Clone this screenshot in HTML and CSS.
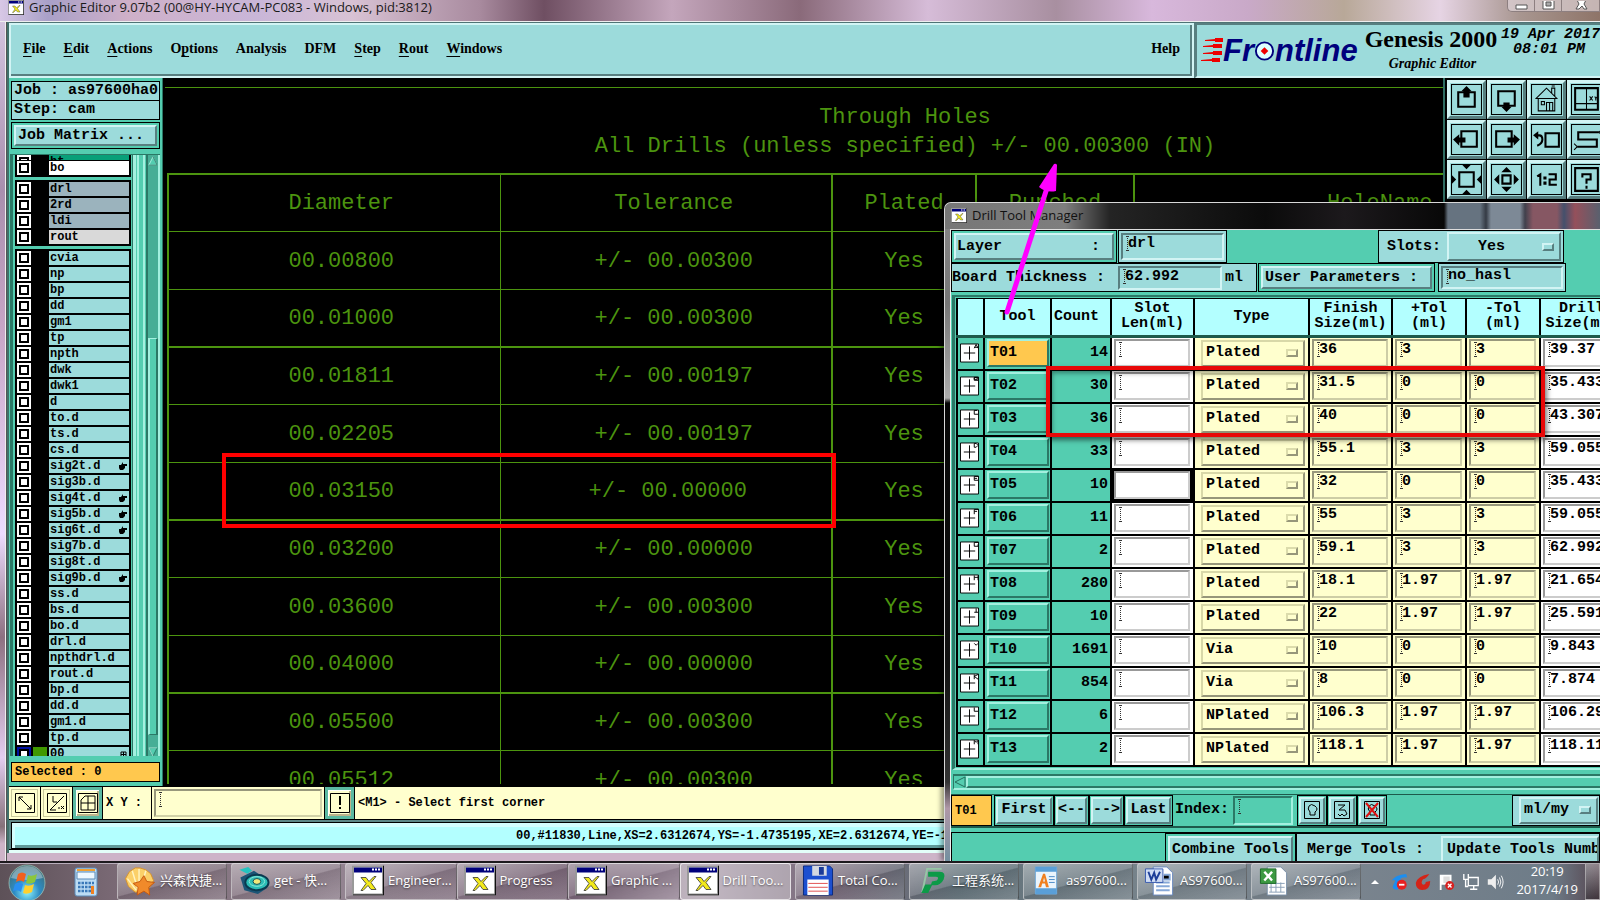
FILE: index.html
```html
<!DOCTYPE html>
<html lang="en">
<head>
<meta charset="utf-8">
<title>Graphic Editor</title>
<link rel="stylesheet" href="styles.css">
</head>
<body>
<svg class="defs" aria-hidden="true">
  <symbol id="x-app" viewBox="0 0 32 30"><path fill="#999" d="M0 0h32v30H0z"/><path fill="#111" d="M31 0h1v30H1v-1h30z"/><path fill="#fff" d="M2 2h28v26H2z"/><path fill="#00007c" d="M2 2h28v5H2z"/><path fill="#fff" d="M20 3h2v2h-2zm3 0h2v2h-2zm3 0h2v2h-2z"/><path d="M9 12h5l3 4 5-5h2l-5 6 5 7h-5l-3-4-5 5H9l5-7z" fill="#f3ea1c" stroke="#333" stroke-width=".8"/></symbol>
</svg>
<div class="desk">
  <main class="editor">
    <header class="titlebar">
      <svg class="app-ic"><use href="#x-app"/></svg>
      <h1>Graphic Editor 9.07b2 (00@HY-HYCAM-PC083 - Windows, pid:3812)</h1>
      <div class="win-ctl">
        <button aria-label="Minimize"><svg viewBox="0 0 14 10"><path d="M2 4h11v4H2z" fill="#fff" stroke="#555"/></svg></button>
        <button aria-label="Maximize"><svg viewBox="0 0 14 10"><path d="M2-2h11v10H2z" fill="#fff" stroke="#555"/><path d="M5 1h5v4H5z" fill="#aaa" stroke="#555"/></svg></button>
        <button aria-label="Close"><svg viewBox="0 0 14 10"><path d="M2-3l3 0 3 3 3-3h2L10 3l3 5h-3L8 5 5 8H2l3-5z" fill="#fff" stroke="#555"/></svg></button>
      </div>
    </header>
    <div class="client">
      <div class="topbar">
        <nav class="menubar">
          <button><u>F</u>ile</button><button><u>E</u>dit</button><button><u>A</u>ctions</button><button>O<u>p</u>tions</button><button>Analysis</button><button>DFM</button><button><u>S</u>tep</button><button><u>R</u>out</button><button><u>W</u>indows</button><button class="help">Help</button>
        </nav>
        <div class="brand">
          <div class="logo">
            <svg class="darts" viewBox="0 0 22 26"><path d="M4 2l10-1V0h8v4h-8V3L4 3zM2 8l10-1V6h9v4h-9V9L2 9zM2 15l10-1v-1h9v4h-9v-1H2zM0 22l11-1v-1h8v4h-8v-1H0z" fill="#e00"/></svg>
            <span>Fr</span><svg class="target" viewBox="0 0 22 22"><circle cx="11" cy="11" r="9" fill="#dff" stroke="#00007c" stroke-width="2"/><path d="M11 7l4 4-4 4-4-4z" fill="#e00"/></svg><span>ntline</span>
          </div>
          <div class="product"><strong>Genesis 2000</strong><em>Graphic Editor</em></div>
          <time>19 Apr 2017<br><span>08:01 PM</span></time>
        </div>
      </div>
      <div class="workspace">
        <aside class="side">
          <div class="info">Job : as97600ha0</div>
          <div class="info">Step: cam</div>
          <div class="matrix"><button class="raised">Job Matrix ...</button></div>
          <div class="layers">
            <div class="lists" id="layers"></div>
            <div class="vscroll">
              <svg viewBox="0 0 12 12"><path d="M6 1l5 10H1z" fill="#54cdb0" stroke="#b5f5e6"/><path d="M6 1l5 10H1" fill="none" stroke="#246f5e"/></svg>
              <i></i>
              <svg viewBox="0 0 12 12"><path d="M6 11l5-10H1z" fill="#54cdb0" stroke="#246f5e"/><path d="M6 11L1 1h10" fill="none" stroke="#b5f5e6"/></svg>
            </div>
          </div>
          <div class="selected">Selected : 0</div>
        </aside>
        <section class="canvas">
          <div class="caption"><p>Through Holes</p><p>All Drills (unless specified) +/- 00.00300 (IN)</p></div>
          <table class="holes">
            <colgroup><col class="c1"><col class="c1"><col class="c3"><col class="c4"><col class="c5"></colgroup>
            <thead><tr><th>Diameter</th><th>Tolerance</th><th>Plated</th><th>Punched</th><th>HoleName</th></tr></thead>
            <tbody id="holes"></tbody>
          </table>
        </section>
        <div class="tools">
          <button aria-label="Pan up"><svg viewBox="0 0 30 30"><path class="f" d="M.5.500h29v29H.5z"/><path class="t" d="M7 8h16v14H7z"/><path d="M15 2l5 5h-2v6h-6V7h-2z"/></svg></button>
          <button aria-label="Pan down"><svg viewBox="0 0 30 30"><path class="f" d="M.5.5h29v29H.5z"/><path class="t" d="M7 7h16v14H7z"/><path d="M15 27l-5-5h2v-4h6v4h2z"/></svg></button>
          <button aria-label="Home"><svg viewBox="0 0 30 30"><path class="f" d="M.5.5h29v29H.5z"/><path class="s" d="M5 14L15 4l10 10zM7 14v12h16V14M10 17h3v3h-3zm5 9v-8h6v8m-3-8v8M20 9V4h3v8M20 2h3"/></svg></button>
          <button aria-label="Coordinates"><svg viewBox="0 0 30 30"><path class="f" d="M.5.5h29v29H.5z"/><path class="t" d="M4 4h22v21H4z"/><path class="s" d="M15 4v21M4 19h22M18 12l3 4m0-4l-3 4m5-4l1 2 2-2m-2 2v2"/></svg></button>
          <button aria-label="Pan left"><svg viewBox="0 0 30 30"><path class="f" d="M.5.5h29v29H.5z"/><path class="t" d="M10 7h15v15H10z"/><path d="M2 15l6-5v3h6v5H8v3z"/></svg></button>
          <button aria-label="Pan right"><svg viewBox="0 0 30 30"><path class="f" d="M.5.5h29v29H.5z"/><path class="t" d="M5 7h15v15H5z"/><path d="M28 15l-6-5v3h-6v5h6v3z"/></svg></button>
          <button aria-label="Previous view"><svg viewBox="0 0 30 30"><path class="f" d="M.5.5h29v29H.5z"/><path class="t" d="M14 9h13v13H14zM5 11h3q3 0 3 4t-5 6"/><path d="M2 11l5-4v8z"/></svg></button>
          <button aria-label="Serpentine"><svg viewBox="0 0 30 30"><path class="f" d="M.5.5h29v29H.5z"/><path class="t" d="M27 8H7v7h18v7H6"/><path class="s" d="M30 5l-3 3 3 3M3 19l3 3-3 3"/></svg></button>
          <button aria-label="Zoom in"><svg viewBox="0 0 30 30"><path class="f" d="M.5.5h29v29H.5z"/><path class="t" d="M8 8h14v14H8z"/><path d="M10 0h10l-5 5zM10 30h10l-5-5zM0 10v10l5-5zM30 10v10l-5-5z"/></svg></button>
          <button aria-label="Zoom out"><svg viewBox="0 0 30 30"><path class="f" d="M.5.5h29v29H.5z"/><path class="t" d="M11 11h8v8h-8z"/><path d="M10 8h10l-5-5zM10 22h10l-5 5zM8 10v10l-5-5zM22 10v10l5-5z"/></svg></button>
          <button aria-label="Scale one to two"><svg viewBox="0 0 30 30"><path class="f" d="M.5.5h29v29H.5z"/><path class="t" d="M6 12l3-2v11M17 10h7v5h-6v5h7"/><path d="M12 12h3v3h-3zm0 5h3v3h-3z"/></svg></button>
          <button aria-label="Help"><svg viewBox="0 0 30 30"><path class="f" d="M.5.5h29v29H.5z"/><path class="t" d="M4 4h22v22H4zM11 13v-3h8v5h-4v4m0 2v3"/></svg></button>
        </div>
      </div>
      <div class="cmdbar">
        <button aria-label="Snap"><svg viewBox="0 0 20 20"><path class="s" d="M.5.5h19v19H.5zM4 4l12 12M4 8V4h4m8 8v4h-4"/></svg></button>
        <button aria-label="Angle"><svg viewBox="0 0 20 20"><path class="s" d="M.5.5h19v19H.5zM3 17L17 3M6 3v6h4m1 6h2m1-2l3 3m0-3l-3 3M3 17h6"/></svg></button>
        <button class="teal" aria-label="Grid"><svg viewBox="0 0 20 20"><path class="s" d="M.5.5h19v19H.5zM3 7l4-4h10v14H3zM10 3v14M3 10h14"/></svg></button>
        <label for="xy">X Y :</label>
        <div class="xybox"><input id="xy" class="caret"></div>
        <button class="teal" aria-label="Alert"><svg viewBox="0 0 20 20"><path class="s" d="M.5.5h19v19H.5z"/><path d="M9 3h2v9H9zm0 11h2v2H9z"/></svg></button>
        <output>&lt;M1&gt; - Select first corner</output>
      </div>
      <div class="status"><p>00,#11830,Line,XS=2.6312674,YS=-1.4735195,XE=2.6312674,YE=-1.4735195</p></div>
    </div>
  </main>

  <div class="mark mark-a"></div>

  <section class="dialog" role="dialog" aria-labelledby="dtm">
    <header><svg class="app-ic"><use href="#x-app"/></svg><h2 id="dtm">Drill Tool Manager</h2></header>
    <div class="dlg">
      <div class="drow r1">
        <div class="box teal layer"><button class="raised"><span>Layer</span><span>:</span></button></div>
        <div class="box drl"><input class="caret" value="drl" aria-label="Layer"></div>
        <div class="box slots"><label for="slots">Slots:</label><span class="opt cy"><select id="slots"><option>Yes</option></select></span></div>
      </div>
      <div class="drow r2">
        <div class="box thick"><label for="bt">Board Thickness :</label><input id="bt" class="caret" value="62.992"><span>ml</span></div>
        <div class="box teal user"><button class="raised">User Parameters :</button></div>
        <div class="box hasl"><input class="caret" value="no_hasl" aria-label="User parameters"></div>
      </div>
      <div class="tframe">
        <table class="drills">
          <colgroup><col class="k0"><col class="k1"><col class="k2"><col class="k3"><col class="k4"><col class="k3"><col class="k5"><col class="k5"><col class="k3"></colgroup>
          <thead><tr><th></th><th>Tool</th><th class="cnt">Count</th><th>Slot<br>Len(ml)</th><th>Type</th><th>Finish<br>Size(ml)</th><th>+Tol<br>(ml)</th><th>-Tol<br>(ml)</th><th>Drill<br>Size(ml)</th></tr></thead>
          <tbody id="drills"></tbody>
        </table>
      </div>
      <div class="hscroll"><svg viewBox="0 0 12 12"><path d="M1 6l10-5v10z" fill="#54cdb0" stroke="#246f5e"/></svg><i></i></div>
      <div class="nav">
        <div class="cur">T01</div>
        <div class="box teal go"><button class="raised">First</button></div>
        <div class="box teal step"><button class="raised">&lt;--</button></div>
        <div class="box teal step"><button class="raised">--&gt;</button></div>
        <div class="box teal last"><button class="raised">Last</button></div>
        <label for="ix">Index:</label><input id="ix" class="caret">
        <div class="box teal ib first"><button class="raised" aria-label="Highlight"><svg viewBox="0 0 16 18"><path class="s" d="M.5.5h15v17H.5zM6 11Q3 8 5 5t6 0 0 6v3H6z"/></svg></button></div>
        <div class="box teal ib"><button class="raised" aria-label="Path"><svg viewBox="0 0 16 18"><path class="s" d="M.5.5h15v17H.5zM4 4h7l-6 5h6l2 4-3 2-2-2-2 2-2-2"/></svg></button></div>
        <div class="box teal ib"><button class="raised" aria-label="Clear"><svg viewBox="0 0 16 18"><path class="s" d="M.5.5h15v17H.5zM6 11Q3 8 5 5t6 0 0 6v3H6z"/><path d="M2 2l12 14M14 2L2 16" stroke="#e01010" stroke-width="2"/></svg></button></div>
        <div class="box unit"><span class="opt cy"><select aria-label="Units"><option>ml/my</option></select></span></div>
      </div>
      <div class="acts">
        <div class="box teal comb"><button class="raised">Combine Tools</button></div>
        <div class="box merge"><span>Merge Tools :</span><button class="raised">Update Tools Numbers</button></div>
      </div>
    </div>
  </section>
  <div class="mark mark-b"></div>
  <svg class="arrow" viewBox="0 0 60 156"><path d="M9 150L49 26" stroke="#f0f" stroke-width="5" stroke-linecap="round"/><path d="M56 2q2-1 3 1l-1 26q-10 2-17-4z" fill="#f0f"/></svg>
</div>

<footer class="taskbar">
  <button class="orb" aria-label="Start"><svg viewBox="0 0 40 40"><defs><radialGradient id="og" cx=".5" cy=".75" r=".7"><stop offset="0" stop-color="#8ff6ff"/><stop offset=".5" stop-color="#2e8cc4"/><stop offset="1" stop-color="#3c6f78"/></radialGradient></defs><circle cx="20" cy="20" r="18" fill="url(#og)" stroke="#a9c9b9" stroke-opacity=".7"/><path d="M4 15Q8 3 20 3t16 12Q20 19 4 15z" fill="#fff" opacity=".35"/><path d="M11 11q4-3 8 0l-2 8q-4-3-8 0z" fill="#f2601e"/><path d="M21 12q4 2 9-1l-2 8q-5 3-9 1z" fill="#8cc63c"/><path d="M8 21q4-3 8 0l-2 8q-3-3-8-1z" fill="#2a8ff0"/><path d="M18 22q4 2 9-1l-2 8q-5 3-9 1z" fill="#ffd02e"/></svg></button>
  <button class="calc" aria-label="Calculator"><svg viewBox="0 0 24 30"><rect x="1" y="1" width="22" height="28" rx="2" fill="#bcdcf4" stroke="#5a8ab8"/><path fill="#f0a030" d="M3 2h18v2H3z"/><path fill="#eef8ff" stroke="#5a8ab8" d="M3 5h18v7H3z"/><path d="M4 16h16M4 20h16M4 24h16" stroke="#3a78b8" stroke-width="2.500" stroke-dasharray="2.500 1"/><path fill="#f08020" d="M17 19h3v8h-3z"/></svg></button>
  <div class="tasks">
    <button><svg viewBox="0 0 32 32"><path d="M16 3l6 2 5 4 3 7-4 7-7 4-8 1-7-6-3-8 4-7 6-4z" fill="#fbd069" stroke="#d8922a"/><path d="M14 26L8 6m7 19V4m2 20l5-18M12 26L3 14" stroke="#fff3c0" stroke-width="1.500"/><path d="M20 11l3 6 8 1-6 5 1 8-6-4-7 4 1-8-5-4 7-2z" fill="#f08a2a" stroke="#c55a10"/></svg>兴森快捷...</button>
    <button><svg viewBox="0 0 32 32"><path d="M2 13l14-7 13 9v9L20 30 6 26z" fill="#1b5576"/><ellipse cx="19" cy="18" rx="12" ry="8" fill="#2bbdb6" stroke="#0a3a50" stroke-width="2"/><ellipse cx="19" cy="17" rx="8" ry="5" fill="none" stroke="#8fe6d8"/><ellipse cx="19" cy="17" rx="4" ry="3" fill="#f0e87a" stroke="#084a58"/><path d="M1 5l9-3 4 4-5 3z" fill="#24c4c0"/></svg>get - 快...</button>
    <div class="group">
      <button><svg viewBox="0 0 32 30"><use href="#x-app"/></svg>Engineer...</button>
      <button><svg viewBox="0 0 32 30"><use href="#x-app"/></svg>Progress</button>
      <button><svg viewBox="0 0 32 30"><use href="#x-app"/></svg>Graphic ...</button>
      <button class="on"><svg viewBox="0 0 32 30"><use href="#x-app"/></svg>Drill Too...</button>
    </div>
    <button><svg viewBox="0 0 32 32"><path d="M1 1h27l3 3v27H1z" fill="#1c4fd0" stroke="#0a2a80"/><path fill="#d4d8e0" d="M10 1h15v10H10z"/><path fill="#1a3a98" d="M17 2h5v8h-5z"/><path fill="#fff" d="M5 15h22v16H5z"/><path d="M6 19h20M6 23h20M6 27h20" stroke="#e05050"/></svg>Total Co...</button>
    <button><svg viewBox="0 0 32 32"><path d="M6 28L11 4h15" fill="none" stroke="#96c6a6" stroke-width="2"/><path d="M12 7h12q7 0 4 8-3 6-9 6h-3l-4 8H5l4-9h6l1-3 5-1q3-4-1-4h-8z" fill="#0d9a48"/></svg>工程系统...</button>
    <button><svg viewBox="0 0 32 32"><path d="M5 2h22v28H5z" fill="#eaf4fc" stroke="#6fa8d8"/><path d="M5 2h22v5H5zM5 24h22v6H5z" fill="#5a9fd8"/><path d="M8 23l5-14h2l4 14h-3l-1-4h-3l-1 4zm5-6h2l-1-4z" fill="#f08020"/><path d="M19 12h6m-6 3h6m-6 3h6" stroke="#4a8ac8"/></svg>as97600...</button>
    <button><svg viewBox="0 0 32 32"><path d="M9 2h14l6 6v23H9z" fill="#fff" stroke="#6a8ac0"/><path d="M12 18h14m-14 4h14m-14 4h14M20 10h6v5h-6" stroke="#86a8d8" stroke-width="2"/><path d="M1 4h18v14H1z" fill="#cfdcf4" stroke="#3a5cae"/><path d="M4 7l3 8 3-7 2 7 4-8" fill="none" stroke="#1d3e98" stroke-width="2"/></svg>AS97600...</button>
    <button><svg viewBox="0 0 32 32"><path d="M9 2h14l6 6v23H9z" fill="#fff" stroke="#7a90a8"/><path d="M13 18v10m5-10v10m5-10v10M11 19h16m-16 4h16m-16 5h16" stroke="#8aa0b8"/><path d="M2 4h16v15H2z" fill="#3c9a42" stroke="#1e6a28"/><path d="M6 7l8 9m0-9l-8 9" stroke="#fff" stroke-width="2.500"/></svg>AS97600...</button>
  </div>
  <div class="tray">
    <svg class="up" viewBox="0 0 10 10"><path d="M5 3l4 4H1z" fill="#fff"/></svg>
    <svg viewBox="0 0 20 20"><path d="M2 8Q6 2 18 1l1 4q-6-1-8 2l4 1-3 3-3 7q-6 1-6-3l3-7z" fill="#1c8ef0"/><circle cx="13" cy="13" r="5.500" fill="#e82020"/><path fill="#fff" d="M10 12h6v2h-6z"/></svg>
    <svg viewBox="0 0 20 20"><path d="M17 1q-3 5-7 6-3 4 0 6 3 0 3-3l5-1q0 10-9 10-7-1-7-8 2-8 15-10z" fill="#d42418"/></svg>
    <svg viewBox="0 0 20 20"><path d="M3 2v17M5 3h9v9H5z" stroke="#fff" stroke-width="2" fill="#ddd"/><circle cx="13" cy="14" r="5" fill="#d82020"/><path d="M11 12l4 4m0-4l-4 4" stroke="#fff" stroke-width="1.500"/></svg>
    <svg viewBox="0 0 20 20"><path d="M7 5h11v9H7zM9 18h8m-4-4v4M2 1v6h5V1M4 7v8h3" fill="none" stroke="#fff" stroke-width="1.500"/></svg>
    <svg viewBox="0 0 20 20"><path d="M2 7h4l5-5v16l-5-5H2z" fill="#eee"/><path d="M13 7q2 3 0 6m2-8q3 5 0 10m2-12q4 7 0 14" fill="none" stroke="#fff"/></svg>
  </div>
  <time class="clock">20:19<br>2017/4/19</time>
  <button class="peek" aria-label="Show desktop"></button>
</footer>
<script src="app.js"></script>
</body>
</html>
```
FILE: styles.css
```css
*, *::after { box-sizing: border-box; }
:root {
  --teal: #54cdb0; --teal-l: #a3f0df; --teal-d: #2b7866;
  --cy: #9cdbdb; --cy-l: #d2f4f4; --cy-d: #587f80;
  --cream: #ffffce; --ice: #b3ffff; --amber: #ffc84e; --green: #4c940f;
  --mono: "Liberation Mono", monospace;
  --ui: "Open Sans", "Noto Sans CJK SC", sans-serif;
}
body { margin: 0; height: 100vh; display: flex; flex-direction: column; overflow: hidden; font: bold 15px/18px var(--mono); color: #000; background: #7d6a7c; }
button, input, select { font: inherit; color: inherit; margin: 0; padding: 0; border: 0; border-radius: 0; background: none; }
h1, h2, p { margin: 0; font: inherit; }
svg { display: block; fill: #000; }
.defs { display: none; }
.s { fill: none; stroke: #000; stroke-width: 1; }
.f { fill: none; stroke: #000; }
.t { fill: none; stroke: #000; stroke-width: 2; }

.desk { flex: 1; min-height: 0; position: relative; overflow: hidden; display: flex; }
.editor { flex: 1; min-width: 0; display: flex; flex-direction: column; padding: 0 0 8px 7px; background: linear-gradient(90deg, transparent 5px, #eee 5px 6px, #555 6px 7px, transparent 7px), linear-gradient(#d9cbe6 0, #a98fae 22%, #c7a5c6 38%, #eddcff 62%, #8d7181 74%, #e4cdf0 88%, #86727a 96%, #cdb4c8 98%); }
.titlebar { height: 22px; margin-left: -7px; padding-left: 8px; display: flex; gap: 5px; align-items: flex-start; font: 13px/14px var(--ui); color: #1a1a1a; border-bottom: 1px solid #eee; background: linear-gradient(90deg, #d8c8e6 0, #a9a0c8 3%, #cfb0c8 8%, #c9b6d8 16%, #d8c2d4 22%, #a88a9e 30%, #6f4f62 34%, #c4a6bc 42%, #8a6a7a 50%, #d6bcd8 58%, #a88fa0 66%, #d8b8dc 72%, #c9a9c8 78%, #b8a898 84%, #e6d4e4 90%, #a89690 95%, #8e7468 100%); }
.titlebar h1 { height: 20px; }
.app-ic { width: 16px; height: 15px; }
.win-ctl { margin-left: auto; height: 12px; display: flex; border: 1px solid #8d7f80; border-top: 0; border-right: 0; border-radius: 0 0 0 5px; background: #e9e0e499; }
.win-ctl button { width: 27px; height: 11px; display: grid; place-items: center; border-right: 1px solid #8d7f80; }
.win-ctl button:last-child { width: 38px; }
.win-ctl svg { width: 14px; height: 10px; }
.client { flex: 1; min-height: 0; display: flex; flex-direction: column; border-left: 2px solid #40706a; border-top: 1px solid #4f7375; background: #5e8f8d; }

.topbar { height: 55px; display: grid; grid-template-columns: minmax(0, 1fr) 405px; gap: 1px; background: var(--cy-d); }
.menubar { display: flex; align-items: center; gap: 18px; padding: 0 12px 4px; background: var(--cy); border: 2px solid var(--cy-l); box-shadow: inset -2px -2px var(--cy-d); font: bold 14px/20px "Liberation Serif", serif; }
.menubar u { text-underline-offset: 3px; }
.menubar .help { margin-left: auto; }
.brand { display: flex; overflow: hidden; background: var(--cy); border: 2px solid var(--cy-d); border-right: 0; border-bottom-color: var(--cy-l); padding-left: 4px; white-space: nowrap; }
.logo { display: flex; align-items: center; color: #00007c; font: italic bold 31px/48px "Liberation Sans", sans-serif; }
.logo .darts { width: 22px; height: 26px; }
.logo .target { width: 21px; height: 22px; }
.product { width: 148px; padding: 1px 0 0 7px; display: flex; flex-direction: column; }
.product strong { font: bold 24px/26px "Liberation Serif", serif; }
.product em { font: italic bold 14px/24px "Liberation Serif", serif; padding-left: 24px; }
.brand time { font-style: italic; line-height: 15px; padding-top: 2px; }
.brand time span { padding-left: 12px; }

.workspace { flex: 1; min-height: 0; display: grid; grid-template-columns: 154px minmax(0, 1fr) 157px; background: #000; overflow: hidden; }
.side { min-height: 0; display: flex; flex-direction: column; background: var(--teal); padding: 3px 2px 4px; border: solid #2b7866; border-width: 0 1px 0 0; }
.info { height: 20px; margin-bottom: -1px; line-height: 18px; padding-left: 2px; border: 1px solid #000; background: var(--cy); white-space: nowrap; }
.matrix { margin: 3px 0 5px; height: 27px; border: 1px solid #000; padding: 2px; display: flex; }
.raised { background: var(--cy); border: 2px solid; border-color: var(--cy-l) var(--cy-d) var(--cy-d) var(--cy-l); white-space: nowrap; display: flex; align-items: center; justify-content: center; }
.matrix button { flex: 1; justify-content: flex-start; padding-left: 2px; }
.layers { flex: 1; min-height: 0; display: grid; grid-template-columns: 118px 1fr 14px; background: linear-gradient(90deg, transparent 119px, var(--teal-d) 119px 120px, var(--teal-l) 120px 123px, var(--teal) 123px 124px, var(--teal-l) 124px 126px, var(--teal) 126px 130px, var(--teal-l) 130px 132px, transparent 132px); border: solid var(--teal-d); border-width: 1px 0 0 3px; margin-left: -1px; overflow: hidden; }
.lists { overflow: hidden; padding-left: 2px; height: 100%; font-size: 12px; line-height: 14px; }
.lists ul { margin: 0 0 3px; padding: 0 2px; list-style: none; background: #000; border: solid #000; border-width: 1px 0; }
.lists ul:first-child { border-top: 0; }
.lists li { height: 16px; display: grid; grid-template-columns: 14px 18px 1fr; align-items: center; }
.lists li.cut { height: 5px; align-items: end; overflow: hidden; }
.lists input { appearance: none; width: 14px; height: 14px; background: #fff; border: 2px solid #fff; box-shadow: inset 0 0 0 2px #000; }
.lists label { height: 14px; padding-left: 1px; display: flex; justify-content: space-between; align-items: center; background: var(--cy); }
.lists .gray label { background: #9bb3bd; }
.lists .silver label { background: #d9d9d9; }
.lists .white label { background: #fff; }
.lists .deep label { background: #08a079; }
.lists .active input { background: #fff; border-color: #0010a0; }
.lists .active i { height: 14px; margin: 0 2px; background: #409800; }
.lists svg { width: 8px; height: 8px; margin-right: 2px; }
.vscroll { grid-column: 3; display: flex; flex-direction: column; background: #47ae96; border: solid var(--teal-d); border-width: 0 0 0 2px; border-right: 2px solid var(--teal-l); }
.vscroll svg { flex: none; width: 10px; height: 12px; }
.vscroll i { margin: 171px 0 auto; flex: 0 1 397px; background: var(--teal); border: solid; border-width: 1px 2px; border-color: var(--teal-l) var(--teal-d) var(--teal-d) var(--teal-l); }
.vscroll svg:last-child { margin-top: 11px; }
.selected { margin-top: 6px; height: 20px; border: 1px solid #000; background: var(--amber); padding-left: 3px; font-size: 12px; line-height: 18px; }

.canvas { overflow: hidden; margin-bottom: 2px; padding: 9px 0 0 2px; background: #000; color: var(--green); font: 22px/29px var(--mono); white-space: nowrap; }
.caption { height: 86px; padding: 15px 0 0 202px; border-top: 1px solid var(--green); text-align: center; }
.holes { border-collapse: collapse; table-layout: fixed; width: 1457px; margin-left: 2px; border-top: 2px solid var(--green); }
.c1 { width: 332px; } .c3 { width: 144px; } .c4 { width: 158px; } .c5 { width: 491px; }
.holes th, .holes td { padding: 2px 0 0; font-weight: normal; text-align: center; border: 1px solid var(--green); border-left-width: 2px; }
.holes th:nth-child(2), .holes td:nth-child(2) { border-left-width: 1px; padding-left: 16px; }
.holes th:first-child, .holes td:first-child { padding-left: 14px; }
.holes .zero td:nth-child(2) { padding-left: 4px; }
.holes tr { height: 58px; }
.holes thead tr, .holes tbody tr:nth-child(3n) { height: 57px; }
.holes tbody tr:nth-child(3n + 2) td { border-bottom-width: 2px; }

.tools { min-width: 0; overflow: hidden; display: grid; grid-template-columns: repeat(4, 39px); grid-auto-rows: 39px; gap: 1px; align-content: start; padding: 2px 0 0 2px; border-left: 2px solid #2f6d62; }
.tools button { background: var(--cy); border: 3px solid; border-color: var(--cy-l) var(--cy-d) var(--cy-d) var(--cy-l); display: grid; place-items: center; }
.tools svg { width: 31px; height: 31px; overflow: visible; }

.cmdbar { height: 34px; display: flex; gap: 1px; border: solid #000; border-width: 1px 0; background: #000; font-size: 12px; line-height: 33px; }
.cmdbar > * { background: var(--cream); }
.cmdbar button { width: 31px; display: grid; place-items: center; border: 3px double #c8c89c; outline: 1px solid var(--cream); outline-offset: -1px; }
.cmdbar button svg { width: 20px; height: 20px; }
.cmdbar button.teal { width: 29px; border: 3px solid #5bb9a2; outline: 0; box-shadow: inset 1px 1px #fff, inset -2px -2px #bcb48c; }
.cmdbar label { width: 48px; padding-left: 3px; }
.xybox { width: 172px; padding: 2px; display: flex; }
.cmdbar input { flex: 1; min-width: 0; border: 2px solid; border-color: #98987c #d2d2a8 #d2d2a8 #98987c; }
.cmdbar output { flex: 1; padding-left: 3px; }
.status { height: 33px; padding: 2px 0 3px 2px; background: linear-gradient(#5d8888 29px, #000 29px 30px, #e3fff9 30px); font-size: 12px; line-height: 20px; }
.status p { height: 27px; padding: 3px 0 0 504px; border: solid #000; border-width: 1px 0 1px 1px; background: var(--ice); box-shadow: inset 3px 4px #d4ffff, inset 0 -3px #609a9a; white-space: nowrap; overflow: hidden; }

.mark { position: absolute; border: 4px solid #f00; pointer-events: none; }
.mark-a { left: 222px; top: 453px; width: 614px; height: 75px; }
.mark-b { left: 1046px; top: 366px; width: 499px; height: 71px; border-color: #e80808; box-shadow: 2px 3px 5px #0008, inset 2px 3px 5px #0006; }
.arrow { position: absolute; left: 998px; top: 162px; width: 60px; height: 156px; pointer-events: none; }

.dialog { position: absolute; left: 944px; right: 0; top: 202px; bottom: 0; overflow: hidden; display: flex; flex-direction: column; border: solid #d8d8d8; border-width: 1px 0 0 1px; border-radius: 7px 0 0 0; background: linear-gradient(#888 0, #777 100px, #aaa 195px, #050505 200px, #111 70%, #333 88%, #b098a8 92%, #7390a0 100%); padding-left: 5px; box-shadow: -3px 0 5px #0006; }
.dialog header { flex: none; height: 26px; margin-left: -5px; padding: 0 0 2px 6px; display: flex; align-items: center; gap: 5px; font: 13px/18px var(--ui); color: #111; background: linear-gradient(90deg, #777 0, #7e7e7e 120px, #242424 165px, #0b0b0b 320px, #1c191c 400px, #080808 499px, #667380 503px 535px, #343a44 541px, #7d8996 546px 575px, #40404c 580px, #865763 588px 612px, #44506c 619px, #95505b 630px, #59606e 655px); }
.dlg { flex: 1; min-height: 0; display: flex; flex-direction: column; background: var(--teal); border-left: 1px solid #eee; border-top: 1px solid #ddd; overflow: hidden; white-space: nowrap; }
.drow { flex: none; display: flex; gap: 1px; }
.box { flex: none; display: flex; padding: 2px; border: 1px solid #000; background: var(--cy); }
.box.teal { background: var(--teal); }
.box .raised { flex: 1; }
.r1 { height: 33px; }
.r2 { height: 29px; }
.layer { width: 166px; }
.layer .raised { justify-content: space-between; padding: 0 12px 0 1px; }
.dlg input { min-width: 0; border: 2px solid; border-color: var(--cy-d) var(--cy-l) var(--cy-l) var(--cy-d); padding: 0 0 6px 5px; }
.caret { --c: #333; background: linear-gradient(var(--c), var(--c)) 3px 1px / 3px 1px no-repeat, linear-gradient(var(--c), var(--c)) 3px 15px / 3px 1px no-repeat, repeating-linear-gradient(var(--c) 0 1px, transparent 1px 2px) 4px 1px / 1px 15px no-repeat; }
.box > input { flex: 1; }
.drl { width: 109px; }
.slots { width: 186px; margin-left: 150px; padding: 1px 2px; justify-content: space-between; align-items: center; }
.slots label { padding-left: 6px; }
.slots .opt { width: 114px; height: 29px; }
.opt { display: grid; }
.opt select, .opt::after { grid-area: 1 / 1; }
.opt select { appearance: none; width: 100%; border: 2px solid; border-color: #d8d8a8 #96967a #96967a #d8d8a8; padding-left: 3px; }
.opt.cy select { border-color: var(--cy-l) var(--cy-d) var(--cy-d) var(--cy-l); }
.slots .opt select { padding-left: 29px; }
.opt::after { content: ""; width: 12px; height: 8px; place-self: center end; margin-right: 7px; border: 2px solid; border-color: #dcdcac #96967a #96967a #dcdcac; pointer-events: none; }
.opt.cy::after { border-color: var(--cy-l) var(--cy-d) var(--cy-d) var(--cy-l); }
.thick { width: 306px; align-items: center; padding-left: 0; }
.thick label { width: 166px; }
.thick input { flex: 0 0 104px; height: 24px; }
.thick span { padding-left: 3px; }
.user { width: 177px; }
.user .raised { justify-content: flex-start; padding-left: 2px; }
.hasl { width: 128px; margin-left: 2px; }
.r2 input { padding-bottom: 3px; }

.tframe { flex: none; margin: 3px 0 0 1px; padding: 1px 0 1px 1px; border: solid var(--teal-d); border-width: 2px 0 0 3px; border-bottom: 2px solid var(--teal-l); overflow: hidden; }
.drills { border-collapse: collapse; table-layout: fixed; width: 666px; }
.k0 { width: 27px; } .k1 { width: 67px; } .k2 { width: 60px; } .k3 { width: 83px; } .k4 { width: 115px; } .k5 { width: 74px; }
.drills th { height: 38px; background: var(--ice); border: solid #000; border-width: 1px 2px; font-weight: bold; line-height: 15px; padding: 0 0 2px; }
.drills th.cnt { text-align: left; padding-left: 2px; }
.drills thead { border-bottom: 3px solid #1d5a4b; }
.drills td { height: 33px; padding: 1px 3px 1px 2px; border: 2px solid #000; }
.drills svg { width: 19px; height: 20px; }
.drills button { width: 62px; height: 28px; padding-left: 1px; text-align: left; background: var(--teal); border: 2px solid; border-color: var(--teal-l) var(--teal-d) var(--teal-d) var(--teal-l); }
.drills .cur-tool { background: var(--amber); }
.drills td.n { text-align: right; padding-right: 2px; }
.drills td.w { background: #fff; }
.drills td.y { background: var(--cream); }
.drills input { display: block; width: 100%; height: 28px; border-color: #98987c #cdcda6 #cdcda6 #98987c; padding-bottom: 8px; }
.drills .w input { border-color: #999 #ccc #ccc #999; }
.drills .w .focus { background: #fff; outline: 3px solid #000; outline-offset: 0; }
.drills .opt { height: 27px; margin-left: 4px; }

.hscroll { flex: none; height: 16px; margin: 4px 0 4px 2px; display: flex; border: solid; border-width: 2px 0 2px 1px; border-color: var(--teal-d) var(--teal-d) var(--teal-l) var(--teal-d); }
.hscroll svg { width: 12px; height: 12px; }
.hscroll i { flex: 1; border: solid; border-width: 2px 0 2px 2px; border-color: var(--teal-l) var(--teal-d) var(--teal-d) var(--teal-l); }
.nav { flex: none; height: 34px; display: flex; gap: 0; border: solid #1d5a4b; border-width: 1px 0 2px; }
.nav .cur { width: 41px; margin-right: 2px; padding: 6px 0 0 3px; background: var(--amber); border: 1px solid #000; font-size: 12px; }
.nav .box { padding: 1px; }
.nav .go { width: 60px; }
.nav .step { width: 35px; }
.nav .last { width: 49px; }
.nav > label { padding: 6px 4px 0 2px; }
.nav > input { width: 60px; border-color: var(--teal-d) var(--teal-l) var(--teal-l) var(--teal-d); margin: 1px 0; }
.nav .ib { width: 30px; }
.nav .first { margin-left: 4px; }
.nav .ib svg { width: 16px; height: 18px; flex: none; }
.nav .unit { margin-left: auto; width: 88px; padding-left: 6px; }
.unit .opt { flex: 1; }
.acts { flex: none; height: 36px; margin-top: 4px; display: flex; border-top: 1px solid #000; border-left: 1px solid #000; }
.comb { margin-left: 213px; }
.comb .raised { padding: 0 2px; }
.merge { flex: 1; padding: 2px 0 2px 10px; align-items: center; justify-content: space-between; }
.merge .raised { flex: 0 0 158px; align-self: stretch; justify-content: flex-start; overflow: hidden; padding-left: 4px; }

.taskbar { flex: none; height: 39px; display: flex; align-items: center; border-top: 2px solid #1d1a1e; color: #fff; font: 13px/18px var(--ui); box-shadow: inset 0 1px #b9aebb; background: linear-gradient(90deg, #5d5158 0, #7d6c78 8%, #948592 22%, #7a6678 36%, #a292a2 44%, #786a7a 52%, #607078 60%, #78848c 72%, #7a848e 84%, #6e7c88 97%, #56454f 100%); }
.orb { flex: none; margin-left: 7px; width: 40px; height: 38px; }
.calc { flex: none; margin: 0 19px 0 27px; width: 24px; height: 30px; }
.tasks { display: flex; gap: 4px; height: 37px; }
.group { display: flex; width: 446px; }
.group button { flex: 1 1 0; border-radius: 0; }
.tasks button { width: 110px; min-width: 0; padding: 0 0 3px 6px; display: flex; align-items: center; gap: 4px; border: 1px solid #ddd8; border-color: #eeea #3338 #ddd8 #eee8; border-radius: 3px; background: linear-gradient(165deg, #fff6, #fff2 50%, #0001 52%, #fff2); white-space: nowrap; overflow: hidden; text-shadow: 0 1px 2px #0008; }
.tasks button svg { flex: none; width: 32px; height: 31px; }
.tasks button.on { background: #fff5; border-color: #fffa; }
.tray { margin-left: 9px; display: flex; align-items: center; gap: 4px; }
.tray svg { width: 20px; height: 18px; }
.tray .up { width: 10px; height: 10px; margin-right: 5px; }
.clock { margin-left: auto; margin-right: 7px; padding-bottom: 4px; text-align: center; }
.peek { width: 15px; height: 37px; border: 1px solid #ccc8; background: linear-gradient(#fff5, #0004); }
```
FILE: app.js
```js
const layerGroups = [
  ["deep cut|bt", "white|bo"],
  ["gray|drl", "gray|2rd", "gray|ldi", "silver|rout"],
  ["cvia", "np", "bp", "dd", "gm1", "tp", "npth", "dwk", "dwk1", "d", "to.d", "ts.d", "cs.d", "sig2t.d*", "sig3b.d", "sig4t.d*",
   "sig5b.d*", "sig6t.d*", "sig7b.d", "sig8t.d", "sig9b.d*", "ss.d", "bs.d", "bo.d", "drl.d", "npthdrl.d", "rout.d", "bp.d", "dd.d", "gm1.d", "tp.d", "active|00#"]
];
const hand = '<svg viewBox="0 0 8 8"><path d="M4 0v2h4v2H6v2L4 8H1L0 6V3h2z"/></svg>';
const gridMark = '<svg viewBox="0 0 8 8"><path d="M2 2h5v5H2zM4.500 2v5M2 4.500h5" fill="none" stroke="#000"/></svg>';
let n = 0;
document.getElementById("layers").innerHTML = layerGroups.map(g => "<ul>" + g.map(entry => {
  const [cls, raw] = entry.includes("|") ? entry.split("|") : ["", entry];
  const mark = raw.endsWith("*") ? hand : raw.endsWith("#") ? gridMark : "";
  const id = "layer" + n++;
  return `<li class="${cls}"><input type="checkbox" id="${id}"><i></i><label for="${id}">${raw.replace(/[*#]/, "")}${mark}</label></li>`;
}).join("") + "</ul>").join("");

const holes = [["00.00800", "00.00300"], ["00.01000", "00.00300"], ["00.01811", "00.00197"], ["00.02205", "00.00197"], ["00.03150", "00.00000"],
  ["00.03200", "00.00000"], ["00.03600", "00.00300"], ["00.04000", "00.00000"], ["00.05500", "00.00300"], ["00.05512", "00.00300"]];
document.getElementById("holes").innerHTML = holes.map(([d, t]) =>
  `<tr class="${d === "00.03150" ? "zero" : ""}"><td>${d}</td><td>+/- ${t}</td><td>Yes</td><td></td><td></td></tr>`).join("");

const drills = [[14, "Plated", "36", "3", "39.37"], [30, "Plated", "31.5", "0", "35.433"], [36, "Plated", "40", "0", "43.307"],
  [33, "Plated", "55.1", "3", "59.055"], [10, "Plated", "32", "0", "35.433"], [11, "Plated", "55", "3", "59.055"],
  [2, "Plated", "59.1", "3", "62.992"], [280, "Plated", "18.1", "1.97", "21.654"], [10, "Plated", "22", "1.97", "25.591"],
  [1691, "Via", "10", "0", "9.843"], [854, "Via", "8", "0", "7.874"], [6, "NPlated", "106.3", "1.97", "106.299"], [2, "NPlated", "118.1", "1.97", "118.11"]];
const glyphs = ["M15 5l2-4 2 4M15 4h4", "M15 1h3v2h-3zh4v3h-4z", "M18 1h-3v4h4", "M15 1h2l2 2-2 2h-2z", "M19 1h-4v4h4M15 3h3", "M19 1h-4v5M15 3h3",
  "M19 1h-4v4h4V3", "M15 1v5M19 1v5M15 3h4", "M17 1v4M15 5h4", "M15 3l2 2 2-2", "M15 1v5M19 1l-4 2 4 3", "M15 1v4h4", "M15 5V1l2 2 2-2v4"];
document.getElementById("drills").innerHTML = drills.map(([count, type, finish, tol, size], i) => {
  const tool = "T" + String(i + 1).padStart(2, "0");
  const field = (label, v, cls = "caret") => `<input class="${cls}" value="${v}" aria-label="${tool} ${label}">`;
  return `<tr><td><svg viewBox="0 0 20 20"><path d="M.5.5h19v19H.5z" fill="#fff" stroke="#000"/><path class="s" d="M10 3v14M4 10h12"/><path class="s" d="${glyphs[i]}"/></svg></td>
  <td><button class="${i ? "" : "cur-tool"}">${tool}</button></td><td class="n">${count}</td>
  <td class="w">${field("slot length", "", i === 4 ? "focus" : "caret")}</td>
  <td class="y"><span class="opt"><select aria-label="${tool} type"><option>${type}</option></select></span></td>
  <td class="y">${field("finish size", finish)}</td><td class="y">${field("plus tolerance", tol)}</td><td class="y">${field("minus tolerance", tol)}</td>
  <td class="w">${field("drill size", size)}</td></tr>`;
}).join("");
```
